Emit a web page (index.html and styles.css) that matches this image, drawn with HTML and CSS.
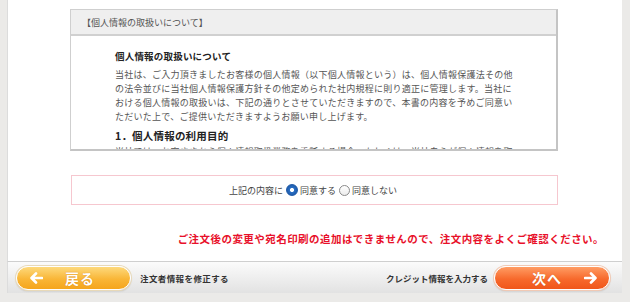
FILE: index.html
```html
<!DOCTYPE html>
<html lang="ja">
<head>
<meta charset="utf-8">
<link rel="stylesheet" href="styles.css">
</head>
<body>
<div class="page">
  <div class="panel">
    <div class="policy">
      <div class="policy-head">【個人情報の取扱いについて】</div>
      <div class="policy-body">
        <h3 class="policy-title">個人情報の取扱いについて</h3>
        <p class="policy-text">当社は、ご入力頂きましたお客様の個人情報（以下個人情報という）は、個人情報保護法その他の法令並びに当社個人情報保護方針その他定められた社内規程に則り適正に管理します。当社における個人情報の取扱いは、下記の通りとさせていただきますので、本書の内容を予めご同意いただいた上で、ご提供いただきますようお願い申し上げます。</p>
        <h4 class="policy-sub">1．個人情報の利用目的</h4>
        <p class="policy-text policy-next">当社では、お客さまから個人情報取扱業務を委託する場合、もしくは、当社自らが個人情報を取得する場合には、その利用目的を明示します。</p>
      </div>
    </div>
    <div class="agree">
      <span class="agree-label">上記の内容に</span>
      <span class="radio radio-on"></span><span class="agree-opt">同意する</span>
      <span class="radio"></span><span class="agree-opt">同意しない</span>
    </div>
    <p class="notice">ご注文後の変更や宛名印刷の追加はできませんので、注文内容をよくご確認ください。</p>
  </div>
  <div class="bar">
    <div class="bar-left">
      <span class="btn btn-back">
        <svg class="arrow" width="14" height="12" viewBox="0 0 14 12"><path d="M13 6H3M7 1.5L2.5 6 7 10.5" fill="none" stroke="#fff" stroke-width="2.6" stroke-linecap="round" stroke-linejoin="round"/></svg>
        <span class="btn-text">戻る</span>
      </span>
      <span class="bar-label">注文者情報を修正する</span>
    </div>
    <div class="bar-right">
      <span class="bar-label">クレジット情報を入力する</span>
      <span class="btn btn-next">
        <span class="btn-text">次へ</span>
        <svg class="arrow" width="14" height="12" viewBox="0 0 14 12"><path d="M1 6H11M7 1.5L11.5 6 7 10.5" fill="none" stroke="#fff" stroke-width="2.6" stroke-linecap="round" stroke-linejoin="round"/></svg>
      </span>
    </div>
  </div>
</div>
</body>
</html>
```

FILE: styles.css
```css
* { box-sizing: border-box; }
html, body {
  margin: 0;
  padding: 0;
  background: #ebeae8;
  font-family: "Noto Sans CJK JP", "Noto Sans", sans-serif;
}
.page {
  width: 630px;
  height: 302px;
  overflow: hidden;
}
.panel {
  margin-left: 7px;
  width: 615px;
  height: 261px;
  background: #fff;
  border-left: 1px solid #dcdcdc;
  padding-top: 9px;
  display: flex;
  flex-direction: column;
}
.policy {
  margin-left: 62px;
  width: 488px;
  height: 142px;
  border: 1px solid #cfcfcf;
  border-right: 2px solid #c4c4c4;
  border-bottom: 2px solid #c4c4c4;
  overflow: hidden;
  background: #fff;
}
.policy-head {
  height: 26px;
  background: #efefef;
  border-bottom: 2px solid #d0d0d0;
  font-size: 9px;
  line-height: 25px;
  color: #555;
  padding-left: 11px;
}
.policy-body {
  padding: 14px 0 0 44px;
  width: 446px;
  color: #444;
}
.policy-title {
  margin: 0;
  font-size: 9.5px;
  line-height: 12px;
  font-weight: bold;
  color: #222;
  letter-spacing: 0.2px;
}
.policy-text {
  margin: 6px 0 0;
  width: 402px;
  font-size: 9px;
  line-height: 14px;
  letter-spacing: 0.25px;
  color: #555;
}
.policy-sub {
  margin: 4px 0 0;
  font-size: 10.5px;
  line-height: 16px;
  font-weight: bold;
  color: #222;
  letter-spacing: 0.2px;
}
.policy-next {
  margin-top: 1px;
}
.agree {
  margin: 24px 0 0 63px;
  width: 487px;
  height: 30px;
  border: 1px solid #f6c7cf;
  display: flex;
  align-items: center;
  justify-content: center;
  font-size: 9px;
  color: #444;
}
.agree-label { margin-right: 3px; }
.agree-opt { margin-right: 3px; }
.radio {
  width: 11px;
  height: 11px;
  border-radius: 50%;
  border: 1px solid #8a8a8a;
  background: linear-gradient(#fff, #ececec);
  margin-right: 2px;
  display: inline-block;
}
.radio-on {
  width: 12px;
  height: 12px;
  border: 1px solid #1e5aa8;
  background: radial-gradient(circle, #fff 0 1.8px, #2a6fc4 2.3px, #17509d 100%);
}
.notice {
  margin: 27px 18px 0 0;
  text-align: right;
  color: #e8102a;
  font-size: 10.5px;
  line-height: 14px;
  font-weight: bold;
  letter-spacing: 0.45px;
}
.bar {
  margin-left: 7px;
  width: 615px;
  height: 32px;
  border-top: 1px solid #cfcfcf;
  border-left: 1px solid #dcdcdc;
  background: linear-gradient(#fbfbfb, #e2e2e2);
  display: flex;
  align-items: center;
  justify-content: space-between;
  padding: 0 12px 0 8px;
}
.bar-left, .bar-right {
  display: flex;
  align-items: center;
}
.bar-label {
  font-size: 8.5px;
  font-weight: bold;
  color: #333;
}
.bar-left .bar-label { margin-left: 9px; letter-spacing: 0.4px; }
.bar-right .bar-label { margin-right: 6px; }
.btn {
  display: flex;
  align-items: center;
  height: 24px;
  border-radius: 12px;
  border: 1.5px solid #fff;
  box-shadow: 0 0 0 1px #e8d9b8, 0 1px 2px rgba(0,0,0,0.2);
  color: #fff;
  font-weight: bold;
}
.btn-back {
  width: 115px;
  background: linear-gradient(#fdd97c, #f9b637 55%, #f5a51c);
  padding-left: 12px;
}
.btn-back .btn-text { margin-left: 22px; }
.btn-next {
  width: 116px;
  background: linear-gradient(#ff9c63, #f7692c 55%, #f0561a);
  box-shadow: 0 0 0 1px #f1c9b4, 0 1px 2px rgba(0,0,0,0.2);
  padding-left: 37px;
}
.btn-next .arrow { margin-left: 22px; }
.btn-text {
  font-size: 14px;
  line-height: 20px;
  letter-spacing: 1px;
  text-shadow: 0 0 1px rgba(190,90,0,0.7);
}
```
